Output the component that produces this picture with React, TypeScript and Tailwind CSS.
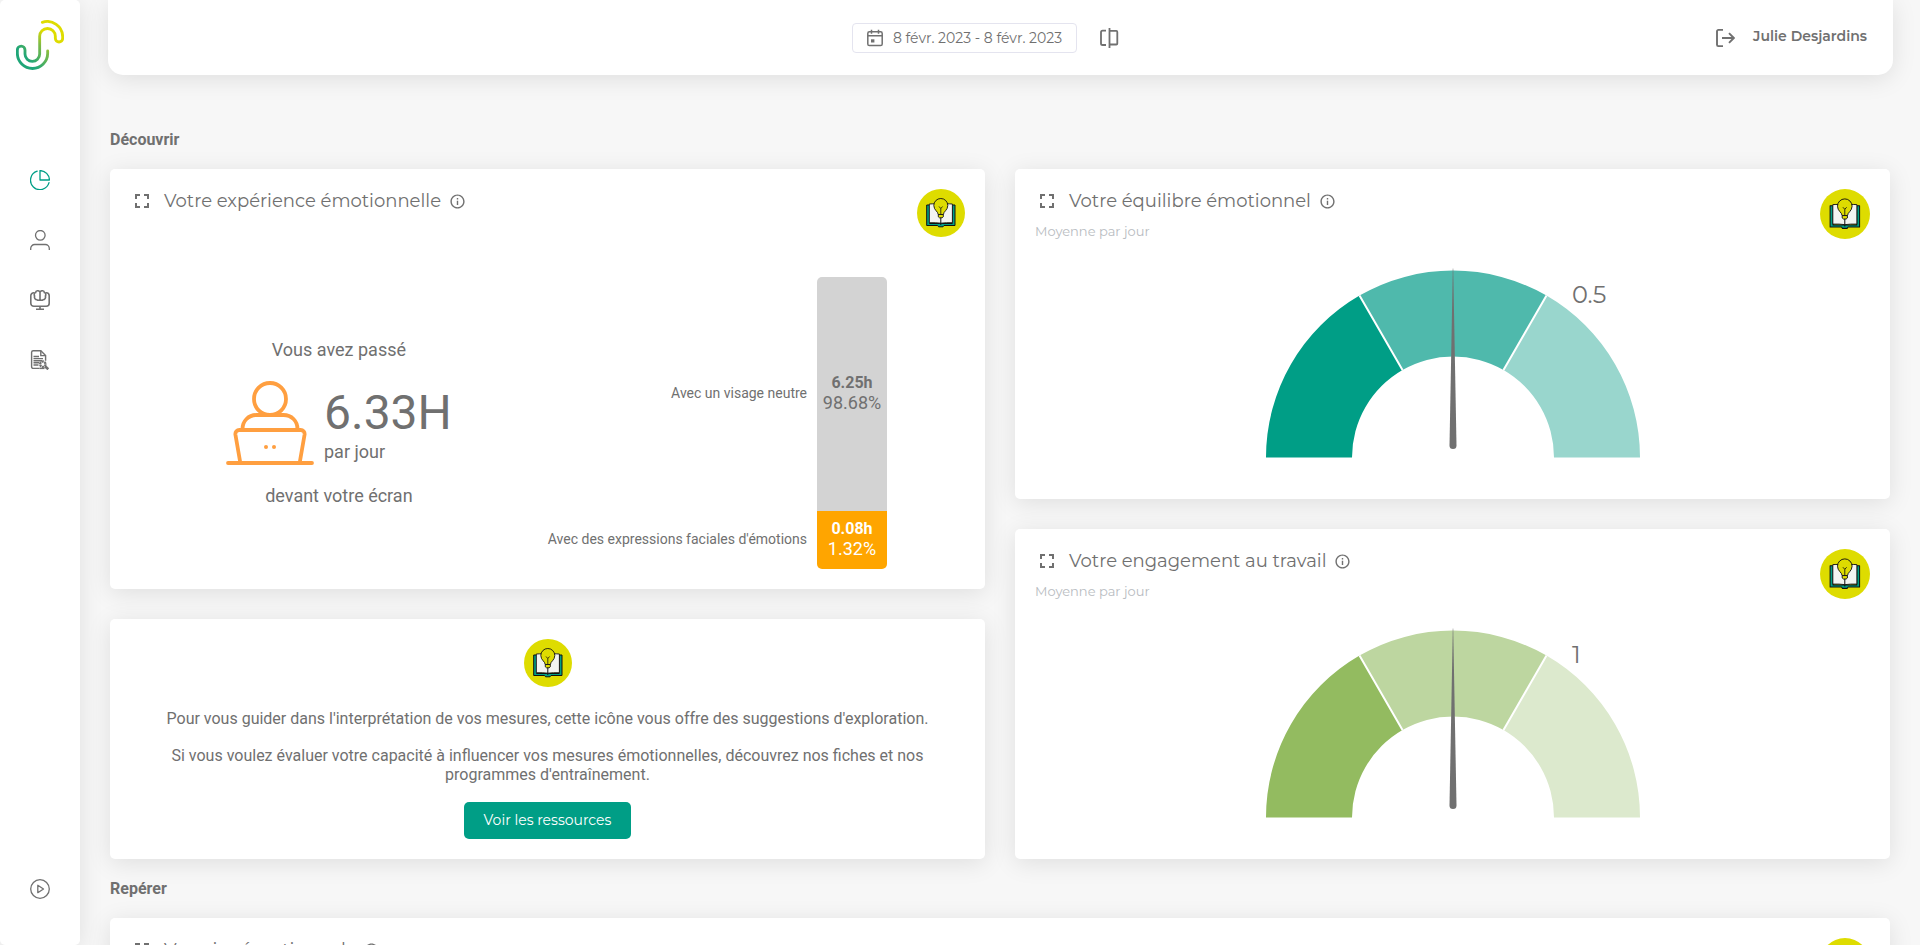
/**
 * Dashboard: tableau de bord émotionnel (sidebar, header, cartes de mesures)
 */
import type { ReactNode } from 'react'
import { clsx } from 'clsx'
import { MdFullscreen, MdInfoOutline } from 'react-icons/md'

const MONT = "font-[Montserrat,Inter,sans-serif]"

// ── Icons ─────────────────────────────────────────────────────────────────────

function Logo() {
  return (
    <svg viewBox="48 60 144 150" className="h-[50px] w-12" fill="none" aria-hidden="true">
      <defs>
        <linearGradient id="logo" gradientUnits="userSpaceOnUse" x1="60" y1="190" x2="180" y2="80">
          <stop offset="0.15" stopColor="#1fa678" />
          <stop offset="0.5" stopColor="#7dba45" />
          <stop offset="0.7" stopColor="#dedc00" />
        </linearGradient>
      </defs>
      <path
        d="M143 153v7a45.500 45.500 0 0 1-91 0v-10a11.500 11.500 0 0 1 23 0v12a22 22 0 0 0 44 0v-53a23.500 23.500 0 0 1 47 0v6a11 11 0 0 0 22 0v-5a46 46 0 0 0-61-43"
        stroke="url(#logo)"
        strokeWidth="8.500"
        strokeLinecap="round"
      />
    </svg>
  )
}

function PieIcon() {
  return (
    <svg viewBox="0 0 20 20" className="size-5" fill="none" stroke="currentColor" strokeWidth="1.3">
      <path d="M7.200 1.200A9.400 9.400 0 1 0 19 12.700" strokeLinecap="round" />
      <path d="M10 .6V10h9.400A9.400 9.400 0 0 0 10 .6Z" strokeLinejoin="round" />
    </svg>
  )
}

function UserIcon() {
  return (
    <svg viewBox="0 0 20 20" className="size-5" fill="none" stroke="currentColor" strokeWidth="1.300">
      <circle cx="10.300" cy="5.300" r="4.800" />
      <path d="M.7 20v-1.500a4 4 0 0 1 4-4h10.600a4 4 0 0 1 4 4V20" />
    </svg>
  )
}

function BrainScreenIcon() {
  return (
    <svg viewBox="0 0 20 20" className="size-5" fill="none" stroke="currentColor" strokeWidth="1.600">
      <path d="M4.300 2.800H3.800A3 3 0 0 0 .8 5.800v7.400a3 3 0 0 0 3 3h12.400a3 3 0 0 0 3-3V5.800a3 3 0 0 0-3-3h-.5" />
      <path d="M10 2.200C8.800 0 5.800.5 5.600 2.600 4 3.200 4 5 4.600 6c-.6 2 .6 3.800 2.400 3.800 1 .8 2.600.5 3-.5.4 1 2 1.300 3 .5 1.800 0 3-1.800 2.400-3.800.6-1 .6-2.800-1-3.400C14.200.5 11.200 0 10 2.200v7.100" />
      <path d="M10 16.200v3M6 19.200h8" />
    </svg>
  )
}

function ReportIcon() {
  return (
    <svg viewBox="0 0 20 20" className="size-5" fill="none" stroke="currentColor" strokeWidth="1.400">
      <path d="M9.500 18.400H3.200a1.600 1.600 0 0 1-1.600-1.600V2.200A1.600 1.600 0 0 1 3.200.7h7.600l4.800 4.800v5.200" />
      <path d="M10.800.8v4.800h4.700M3.500 6.500H9M3.500 8.600h9.500M3.500 10.700H12M3.500 12.800h5.500M3.500 15h5" />
      <circle cx="12.800" cy="14.200" r="2.700" strokeWidth="2.300" strokeDasharray="2.200 .6" />
      <path d="m15 16.300 3.300 3" strokeWidth="2.600" />
      <path d="M9.500 18.400h5" />
    </svg>
  )
}

function PlayIcon() {
  return (
    <svg viewBox="0 0 20 20" className="size-5" fill="none" stroke="currentColor" strokeWidth="1.300">
      <circle cx="10" cy="10" r="9.300" />
      <path d="M7.800 6.300v7.400l5.700-3.700z" strokeLinejoin="round" />
    </svg>
  )
}

function CalendarIcon() {
  return (
    <svg viewBox="0 0 16 18" className="h-[18px] w-4" fill="none" stroke="currentColor" strokeWidth="1.500">
      <rect x=".8" y="2.800" width="14.400" height="13.800" rx="1.600" />
      <path d="M.8 6.800h14.400M4.500.8v4M11.500.8v4" />
      <rect x="4" y="10.300" width="3.400" height="3.200" fill="currentColor" stroke="none" />
    </svg>
  )
}

function CompareIcon() {
  return (
    <svg viewBox="0 0 20 20" className="size-5" fill="none" stroke="currentColor" strokeWidth="1.800">
      <path d="M7 2.600H3.600a1.600 1.600 0 0 0-1.600 1.600v11.200A1.600 1.600 0 0 0 3.600 17H7M10.500 0v20M10.500 2.900h6.800a1 1 0 0 1 1 1v11.600a1 1 0 0 1-1 1h-6.800" />
    </svg>
  )
}

function LogoutIcon() {
  return (
    <svg viewBox="0 0 20 20" className="size-5" fill="none" stroke="currentColor" strokeWidth="1.900">
      <path d="M8 1.900H3.400A1.400 1.400 0 0 0 2 3.300v13.400a1.400 1.400 0 0 0 1.400 1.400H8" />
      <path d="M7 10h12M14 5.200l4.800 4.800-4.800 4.800" />
    </svg>
  )
}

function LaptopPersonIcon() {
  return (
    <svg viewBox="0 0 88 84" className="h-[84px] w-[88px]" fill="none" stroke="#ff9f40" strokeWidth="3.800" strokeLinecap="round" strokeLinejoin="round">
      <circle cx="44" cy="18" r="16" />
      <path d="M16.500 48c0-8 6-14 14-14h27c8 0 14 6 14 14" />
      <path d="m14 80-4.600-26.500a4 4 0 0 1 4-4.500h61.200a4 4 0 0 1 4 4.500L74 80M2 82h84" />
      <circle cx="40" cy="66" r="2" fill="#ff9f40" stroke="none" />
      <circle cx="48" cy="66" r="2" fill="#ff9f40" stroke="none" />
    </svg>
  )
}

function GuideBadge({ className }: { className?: string }) {
  return (
    <svg viewBox="0 0 48 48" className={clsx('shrink-0', className)} aria-hidden="true">
      <circle cx="24" cy="24" r="24" fill="#dedc00" />
      <path d="M9.700 16h2.800v18.500h22.800V16H38v20.500H27l-1 1.300h-4.400l-1-1.300H9.700z" fill="#009e86" stroke="#111" strokeWidth="1" strokeLinejoin="round" />
      <path d="M12.300 15c4-.3 8-.3 11.600.6 3.600-.9 7.500-.9 11.500-.6v18.700c-4-.1-8 0-11.500.5-3.600-.5-7.600-.6-11.600-.5z" fill="#f3f4f2" stroke="#111" strokeWidth=".9" />
      <path d="M23.800 28v8" stroke="#111" strokeWidth="1" />
      <path d="M21.200 25.500c0-3-4.400-4.300-4.400-9a7 7 0 0 1 14 0c0 4.700-4.400 6-4.400 9z" fill="#dedc00" stroke="#111" strokeWidth=".9" />
      <path d="M21.300 25.500h5v2.300l-1.200 1h-2.600l-1.200-1z" fill="#dedc00" stroke="#111" strokeWidth=".9" />
      <path d="M23.800 25v-5.500l-1.800-2m1.800 2 1.800-2" fill="none" stroke="#111" strokeWidth=".8" />
    </svg>
  )
}

// ── Cards ─────────────────────────────────────────────────────────────────────

function Card({ className, children }: { className?: string; children: ReactNode }) {
  return (
    <section className={clsx('rounded-[5px] bg-white shadow-[0_4px_24px_rgba(0,0,0,0.1)]', className)}>
      {children}
    </section>
  )
}

type CardHeaderProps = { title: string; subtitle?: string; badgeClass?: string }

function CardHeader({ title, subtitle, badgeClass = 'size-[50px]' }: CardHeaderProps) {
  return (
    <div className="flex items-start justify-between">
      <div className={MONT}>
        <div className="flex h-6 items-center">
          <button type="button" aria-label="Plein écran" className="mr-2.5">
            <MdFullscreen className="size-6" />
          </button>
          <h3 className="text-lg leading-6 font-normal">{title}</h3>
          <button type="button" aria-label="Information" className="ml-2">
            <MdInfoOutline className="size-[17px]" />
          </button>
        </div>
        {subtitle && <p className="mt-2 text-[13px] leading-5 text-[#b8bcbf]">{subtitle}</p>}
      </div>
      <button type="button" aria-label="Suggestions d'exploration">
        <GuideBadge className={badgeClass} />
      </button>
    </div>
  )
}

function SectionTitle({ children }: { children: ReactNode }) {
  return <h2 className="py-5 text-base leading-[19px] font-bold">{children}</h2>
}

// ── Gauge ─────────────────────────────────────────────────────────────────────

const ARCS = [
  'M0 187.500A187 187 0 0 1 93.500 25.600L136.500 100A101 101 0 0 0 86 187.500Z',
  'M93.500 25.600A187 187 0 0 1 280.500 25.600L237.500 100A101 101 0 0 0 136.500 100Z',
  'M280.500 25.600A187 187 0 0 1 374 187.500H288A101 101 0 0 0 237.500 100Z',
]

function Gauge({ value, colors }: { value: string; colors: string[] }) {
  return (
    <svg viewBox="0 0 374 190" className={clsx('h-[190px] w-[374px] overflow-visible', MONT)} role="img" aria-label={value}>
      {ARCS.map((d, i) => (
        <path key={d} d={d} fill={colors[i]} />
      ))}
      <path d="M93.500 25.600 136.500 100M280.500 25.600 237.500 100" stroke="#fff" strokeWidth="2" />
      <path d="M186.800-1.500h.4L190.500 175.500a3.500 3.500 0 0 1-7 0Z" fill="#707070" />
      <text x="306" y="33" fontSize="24" fill="#707070">
        {value}
      </text>
    </svg>
  )
}

function GaugeCard({ title, value, colors }: { title: string; value: string; colors: string[] }) {
  return (
    <Card className="h-[330px] p-5">
      <CardHeader title={title} subtitle="Moyenne par jour" />
      <div className="mt-[29px] flex justify-center">
        <Gauge value={value} colors={colors} />
      </div>
    </Card>
  )
}

// ── Screen time ───────────────────────────────────────────────────────────────

const SHARES = [
  { label: 'Avec un visage neutre', hours: '6.25h', pct: '98.68%', row: 'h-[234px]', box: 'rounded-t-[5px] bg-[#d3d3d3]' },
  { label: "Avec des expressions faciales d'émotions", hours: '0.08h', pct: '1.32%', row: 'h-[58px]', box: 'rounded-b-[5px] bg-[#ffa500] text-white' },
]

function ScreenTimeCard() {
  return (
    <Card className="h-[420px] p-5">
      <CardHeader title="Votre expérience émotionnelle" badgeClass="size-12" />
      <div className="mt-10 flex justify-between pr-[78px]">
        <div className="flex flex-1 flex-col items-center justify-center text-lg leading-[22px]">
          <p>Vous avez passé</p>
          <div className="mt-5 mb-5 flex items-center gap-2.5">
            <LaptopPersonIcon />
            <div className="pt-0.5">
              <div className="text-5xl leading-[56px]">6.33H</div>
              <div>par jour</div>
            </div>
          </div>
          <p>devant votre écran</p>
        </div>
        <div>
          {SHARES.map((s) => (
            <div key={s.label} className={clsx('flex items-center justify-end gap-2.5', s.row)}>
              <span className="pb-0.5 text-sm">{s.label}</span>
              <div className={clsx('flex h-full w-[70px] flex-col items-center justify-center pb-0.5', s.box)}>
                <span className="text-base leading-5 font-bold">{s.hours}</span>
                <span className="text-lg leading-5">{s.pct}</span>
              </div>
            </div>
          ))}
        </div>
      </div>
    </Card>
  )
}

function ResourcesCard() {
  return (
    <Card className="flex h-[240px] flex-col items-center px-[50px] py-5 text-center leading-[19px]">
      <GuideBadge className="size-12" />
      <p className="mt-[22px]">
        Pour vous guider dans l'interprétation de vos mesures, cette icône vous offre des suggestions d'exploration.
      </p>
      <p className="my-[18px]">
        Si vous voulez évaluer votre capacité à influencer vos mesures émotionnelles, découvrez nos fiches et nos
        programmes d'entraînement.
      </p>
      <button type="button" className={clsx('rounded-[5px] bg-[#009e86] px-5 py-2 text-sm leading-[21px] text-white', MONT)}>
        Voir les ressources
      </button>
    </Card>
  )
}

// ── Layout ────────────────────────────────────────────────────────────────────

const NAV = [
  { label: 'Tableau de bord', icon: <PieIcon />, active: true },
  { label: 'Profil', icon: <UserIcon /> },
  { label: 'Entraînement', icon: <BrainScreenIcon /> },
  { label: 'Rapports', icon: <ReportIcon /> },
]

function Sidebar() {
  return (
    <aside className="z-10 flex w-20 shrink-0 flex-col items-center rounded-[5px] bg-white pt-5 pb-[46px] shadow-[0_4px_24px_rgba(0,0,0,0.1)]">
      <a href="#accueil" aria-label="Accueil">
        <Logo />
      </a>
      <nav className="mt-[100px] flex flex-col gap-10">
        {NAV.map((n) => (
          <a key={n.label} href="#nav" aria-label={n.label} className={clsx(n.active && 'text-[#009e86]')}>
            {n.icon}
          </a>
        ))}
      </nav>
      <a href="#tutoriel" aria-label="Tutoriel" className="mt-auto">
        <PlayIcon />
      </a>
    </aside>
  )
}

function Header() {
  return (
    <header className={clsx('mr-[27px] ml-7 grid h-[75px] shrink-0 grid-cols-[1fr_auto_1fr] items-center rounded-b-[15px] bg-white px-[26px] shadow-[0_4px_24px_rgba(0,0,0,0.1)]', MONT)}>
      <div />
      <div className="flex items-center gap-[22px] pr-[30px]">
        <button type="button" className="flex h-[30px] items-center gap-2.5 rounded border border-[#e4e4ef] px-3.5 text-sm">
          <CalendarIcon />
          8 févr. 2023 - 8 févr. 2023
        </button>
        <button type="button" aria-label="Comparer">
          <CompareIcon />
        </button>
      </div>
      <div className="flex items-center justify-end gap-[18px]">
        <button type="button" aria-label="Déconnexion">
          <LogoutIcon />
        </button>
        <span className="pb-1 text-sm font-semibold">Julie Desjardins</span>
      </div>
    </header>
  )
}

export default function App() {
  return (
    <div className="flex h-screen overflow-hidden bg-[#f7f7f7] font-[Roboto,sans-serif] text-[#707070]">
      <Sidebar />
      <div className="flex min-w-0 flex-1 flex-col overflow-y-auto [scrollbar-width:none]">
        <Header />
        <main className="mt-[35px] px-[30px] pb-[30px]">
          <SectionTitle>Découvrir</SectionTitle>
          <div className="grid grid-cols-2 gap-[30px]">
            <div className="flex flex-col gap-[30px]">
              <ScreenTimeCard />
              <ResourcesCard />
            </div>
            <div className="flex flex-col gap-[30px]">
              <GaugeCard title="Votre équilibre émotionnel" value="0.5" colors={['#009e86', '#4fb9ac', '#99d6cd']} />
              <GaugeCard title="Votre engagement au travail" value="1" colors={['#93bb60', '#bdd6a0', '#dce9cd']} />
            </div>
          </div>
          <SectionTitle>Repérer</SectionTitle>
          <Card className="h-[420px] p-5">
            <CardHeader title="Vos pics émotionnels" />
          </Card>
        </main>
      </div>
    </div>
  )
}
